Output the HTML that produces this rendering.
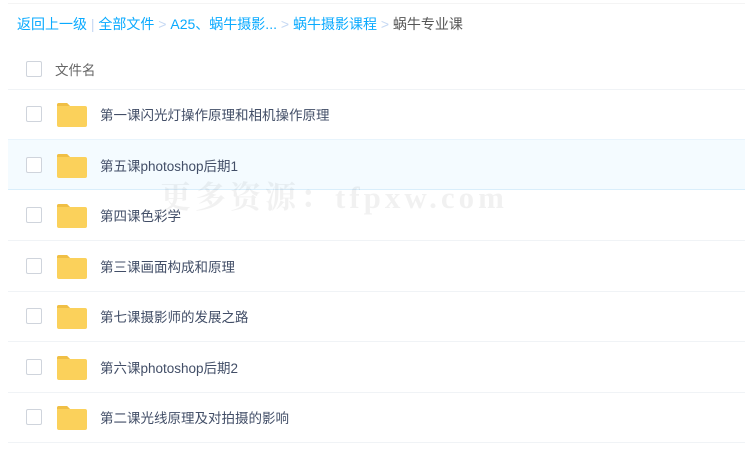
<!DOCTYPE html><html><head><meta charset="utf-8"><style>
body{margin:0;width:745px;height:469px;background:#fff;font-family:"Liberation Sans","Noto Sans CJK SC",sans-serif;position:relative;overflow:hidden}
.top{position:absolute;left:8px;right:0;top:3px;border-top:1px solid #f4f4f4}
.bc{position:absolute;left:17px;top:14px;font-size:14px;color:#09aaff;white-space:nowrap}
.bc .g{color:#c5d8f3}.bc .k{color:#555}
.row{position:absolute;left:8px;right:0;height:50px;border-bottom:1px solid #f0f3f6}
.cb{position:absolute;left:18px;top:17px;width:14px;height:14px;border:1px solid #cfd4dc;border-radius:2px;background:#fff}
.f{position:absolute;left:49px;top:13px;width:30px;height:25px}
.t{position:absolute;left:92px;top:15px;font-size:13.5px;color:#424e67}
.hl{background:#f4fbff;border-bottom:1px solid #d9eefb;border-top:1px solid #e8f4fc}
.wm{position:absolute;left:160px;top:172px;font:bold 31px "Liberation Serif","Noto Serif CJK SC",serif;color:rgba(0,0,0,0.055);letter-spacing:4px;white-space:nowrap}
</style></head><body>
<div class="top"></div>
<div class="bc">返回上一级<span class="g"> | </span>全部文件<span class="g"> &gt; </span>A25、蜗牛摄影...<span class="g"> &gt; </span>蜗牛摄影课程<span class="g"> &gt; </span><span class="k">蜗牛专业课</span></div>
<div class="row" style="top:44px;height:45px"><div class="cb" style="top:17px"></div><div class="t" style="left:47px;top:15px;color:#666">文件名</div></div>
<svg width="0" height="0" style="position:absolute"><defs><g id="fd"><path d="M0 3a2 2 0 0 1 2-2h8l3 3h15a2 2 0 0 1 2 2v17a2 2 0 0 1-2 2H2a2 2 0 0 1-2-2z" fill="#fbd15b"/><path d="M0 3a2 2 0 0 1 2-2h8l3 3H0z" fill="#f0bf45"/></g></defs></svg>
<div class="row" style="top:89px"><div class="cb"></div><svg class="f"><use href="#fd"/></svg><div class="t">第一课闪光灯操作原理和相机操作原理</div></div>
<div class="row hl" style="top:139px;height:49px"><div class="cb"></div><svg class="f"><use href="#fd"/></svg><div class="t">第五课photoshop后期1</div></div>
<div class="row" style="top:190px"><div class="cb"></div><svg class="f"><use href="#fd"/></svg><div class="t">第四课色彩学</div></div>
<div class="row" style="top:241px"><div class="cb"></div><svg class="f"><use href="#fd"/></svg><div class="t">第三课画面构成和原理</div></div>
<div class="row" style="top:291px"><div class="cb"></div><svg class="f"><use href="#fd"/></svg><div class="t">第七课摄影师的发展之路</div></div>
<div class="row" style="top:342px"><div class="cb"></div><svg class="f"><use href="#fd"/></svg><div class="t">第六课photoshop后期2</div></div>
<div class="row" style="top:392px"><div class="cb"></div><svg class="f"><use href="#fd"/></svg><div class="t">第二课光线原理及对拍摄的影响</div></div>
<div class="wm">更多资源：tfpxw.com</div>
</body></html>
